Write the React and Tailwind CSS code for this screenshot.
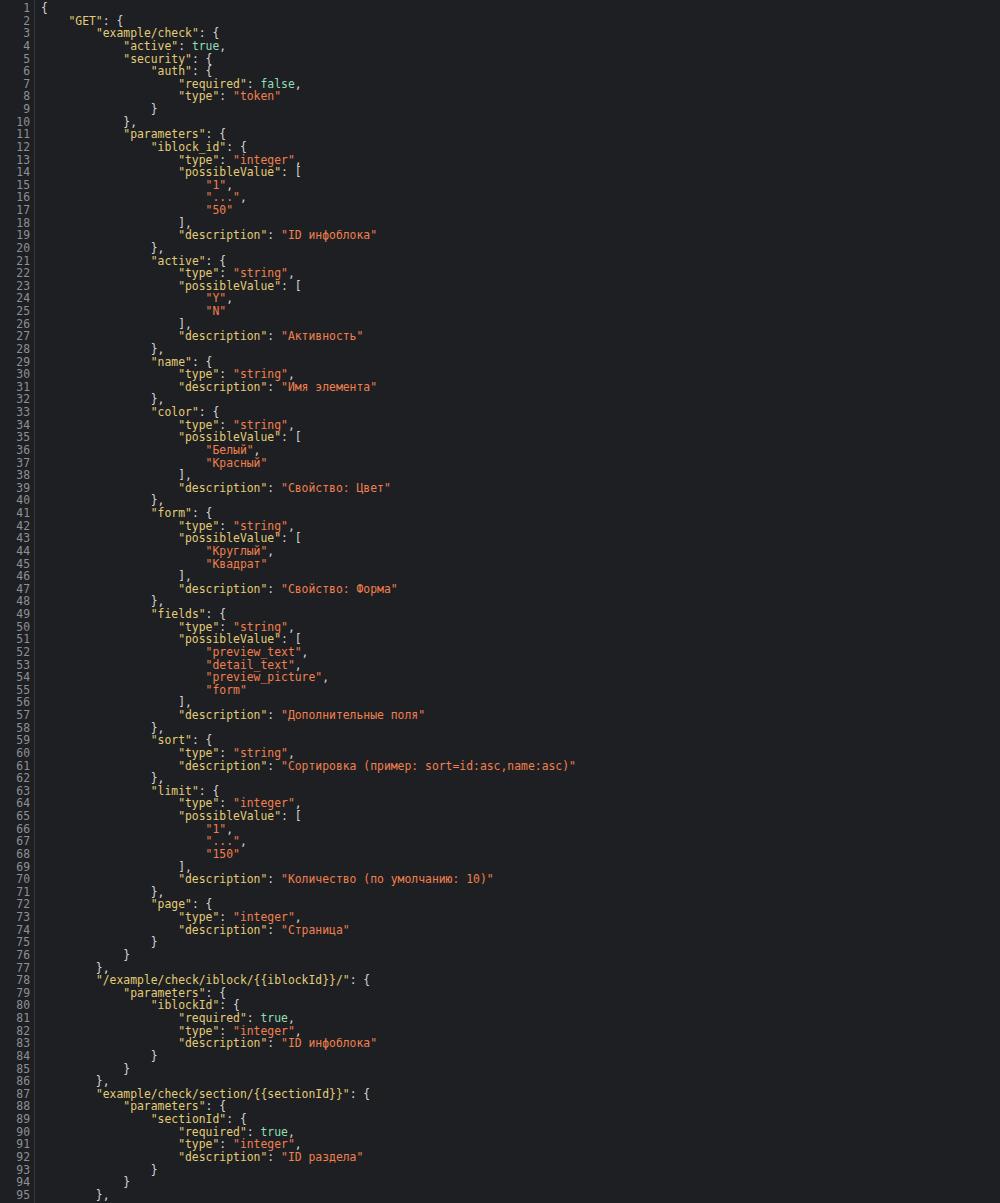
import React from 'react';

const source = `{
    "GET": {
        "example/check": {
            "active": true,
            "security": {
                "auth": {
                    "required": false,
                    "type": "token"
                }
            },
            "parameters": {
                "iblock_id": {
                    "type": "integer",
                    "possibleValue": [
                        "1",
                        "...",
                        "50"
                    ],
                    "description": "ID инфоблока"
                },
                "active": {
                    "type": "string",
                    "possibleValue": [
                        "Y",
                        "N"
                    ],
                    "description": "Активность"
                },
                "name": {
                    "type": "string",
                    "description": "Имя элемента"
                },
                "color": {
                    "type": "string",
                    "possibleValue": [
                        "Белый",
                        "Красный"
                    ],
                    "description": "Свойство: Цвет"
                },
                "form": {
                    "type": "string",
                    "possibleValue": [
                        "Круглый",
                        "Квадрат"
                    ],
                    "description": "Свойство: Форма"
                },
                "fields": {
                    "type": "string",
                    "possibleValue": [
                        "preview_text",
                        "detail_text",
                        "preview_picture",
                        "form"
                    ],
                    "description": "Дополнительные поля"
                },
                "sort": {
                    "type": "string",
                    "description": "Сортировка (пример: sort=id:asc,name:asc)"
                },
                "limit": {
                    "type": "integer",
                    "possibleValue": [
                        "1",
                        "...",
                        "150"
                    ],
                    "description": "Количество (по умолчанию: 10)"
                },
                "page": {
                    "type": "integer",
                    "description": "Страница"
                }
            }
        },
        "/example/check/iblock/{{iblockId}}/": {
            "parameters": {
                "iblockId": {
                    "required": true,
                    "type": "integer",
                    "description": "ID инфоблока"
                }
            }
        },
        "example/check/section/{{sectionId}}": {
            "parameters": {
                "sectionId": {
                    "required": true,
                    "type": "integer",
                    "description": "ID раздела"
                }
            }
        },`;

// split a line into coloured pieces: keys, string values, booleans, punctuation
const tokenize = (line) => {
  const parts = [];
  const re = /("[^"]*")(\s*:)?|(true|false)|([^"tf]+|[tf])/g;
  let m;
  while ((m = re.exec(line)) !== null) {
    if (m[1] && m[2]) {
      parts.push({ text: m[1], cls: 'text-[#e2cd78]' });
      parts.push({ text: m[2], cls: 'text-[#d6d6d6]' });
    } else if (m[1]) {
      parts.push({ text: m[1], cls: 'text-[#f0804f]' });
    } else if (m[3]) {
      parts.push({ text: m[3], cls: 'text-[#8edfb4]' });
    } else {
      parts.push({ text: m[4], cls: 'text-[#d6d6d6]' });
    }
  }
  return parts;
};

const lines = source.split('\n');

export default function App() {
  return (
    <div className="w-[1000px] h-[1203px] overflow-hidden bg-[#1e1f22] flex text-[11.4px] leading-[12.63px] font-['DejaVu_Sans_Mono','Liberation_Mono',monospace]">
      <div className="w-[35px] shrink-0 border-r border-[#34363a] pt-[2px] pr-[4px] text-right text-[#8e9093]">
        {lines.map((_, i) => (
          <div key={i}>{i + 1}</div>
        ))}
      </div>
      <div className="pl-[6px] pt-[2px] whitespace-pre">
        {lines.map((line, i) => (
          <div key={i}>
            {tokenize(line).map((t, j) => (
              <span key={j} className={t.cls}>{t.text}</span>
            ))}
            {line.length === 0 ? ' ' : null}
          </div>
        ))}
      </div>
    </div>
  );
}
